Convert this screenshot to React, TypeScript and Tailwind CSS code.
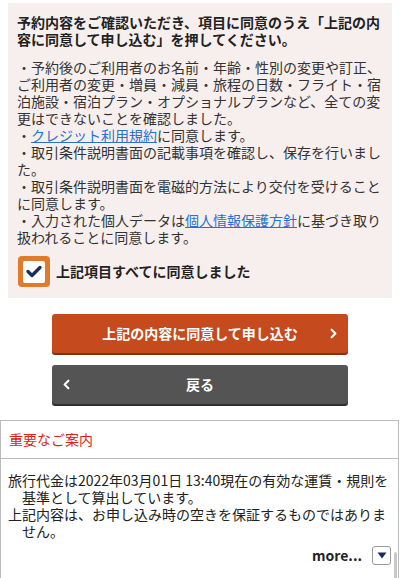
import React, { useState } from "react";
import { ChevronRight, ChevronLeft } from "lucide-react";

const App: React.FC = () => {
  const [agreed, setAgreed] = useState<boolean>(true);

  return (
    <div className="w-[400px] h-[578px] overflow-hidden bg-white font-['Noto_Sans_CJK_JP','Noto_Sans',sans-serif] text-[#222]">
      {/* 同意ボックス */}
      <div className="mt-[3px] mx-2 bg-[#f7efed] px-[9px] pt-[11px] pb-[11px]">
        <p className="text-[14px] font-bold leading-[17px] text-[#222]">
          予約内容をご確認いただき、項目に同意のうえ「上記の内容に同意して申し込む」を押してください。
        </p>
        <div className="mt-[11px] text-[14px] leading-[17px] text-[#333]">
          <p>
            ・予約後のご利用者のお名前・年齢・性別の変更や訂正、ご利用者の変更・増員・減員・旅程の日数・フライト・宿泊施設・宿泊プラン・オプショナルプランなど、全ての変更はできないことを確認しました。
          </p>
          <p>
            ・
            <a href="#" className="text-[#2a6fd1] underline">
              クレジット利用規約
            </a>
            に同意します。
          </p>
          <p>・取引条件説明書面の記載事項を確認し、保存を行いました。</p>
          <p>・取引条件説明書面を電磁的方法により交付を受けることに同意します。</p>
          <p>
            ・入力された個人データは
            <a href="#" className="text-[#2a6fd1] underline">
              個人情報保護方針
            </a>
            に基づき取り扱われることに同意します。
          </p>
        </div>
        <label
          className="mt-[10px] ml-[1px] flex items-center gap-[6px] cursor-pointer"
          onClick={() => setAgreed(!agreed)}
        >
          <span className="w-[32px] h-[31px] rounded-[4px] bg-[#e07a2c] flex items-center justify-center">
            <span className="w-[22px] h-[22px] bg-white rounded-[2px] flex items-center justify-center">
              {agreed && (
                <svg width="16" height="13" viewBox="0 0 16 13">
                  <path
                    d="M2 6.5 L6 10.5 L14 2.5"
                    fill="none"
                    stroke="#1b2d5a"
                    strokeWidth="3.2"
                    strokeLinecap="round"
                    strokeLinejoin="round"
                  />
                </svg>
              )}
            </span>
          </span>
          <span className="text-[14px] font-bold text-[#222]">
            上記項目すべてに同意しました
          </span>
        </label>
      </div>

      {/* ボタン */}
      <div className="mt-4 flex flex-col items-center gap-3">
        <button className="w-[296px] h-[39px] rounded-[3px] bg-[#c54a1e] shadow-[0_2px_0_#7c3511] flex items-center text-white text-[14px] font-bold">
          <span className="w-[30px]" />
          <span className="flex-1 text-center">上記の内容に同意して申し込む</span>
          <span className="w-[30px] flex justify-center">
            <ChevronRight size={15} strokeWidth={3.5} />
          </span>
        </button>
        <button className="w-[296px] h-[39px] rounded-[3px] bg-[#545454] shadow-[0_2px_0_#2e2e2e] flex items-center text-white text-[14px] font-bold">
          <span className="w-[28px] flex justify-center">
            <ChevronLeft size={15} strokeWidth={3.5} />
          </span>
          <span className="flex-1 text-center">戻る</span>
          <span className="w-[28px]" />
        </button>
      </div>

      {/* 重要なご案内 */}
      <div className="relative mt-4 w-[399px] h-[160px] border border-[#bbb]">
        <div className="h-[38px] px-[8px] flex items-center border-b border-[#bbb] text-[14px] text-[#d9221c]">
          重要なご案内
        </div>
        <div className="pl-[7px] pt-[13px] text-[14px] leading-[17px] text-[#222] whitespace-nowrap">
          <p className="pl-[14px] -indent-[14px]">
            旅行代金は2022年03月01日 13:40現在の有効な運賃・規則を
            <br />
            基準として算出しています。
          </p>
          <p className="pl-[14px] -indent-[14px]">
            上記内容は、お申し込み時の空きを保証するものではありま
            <br />
            せん。
          </p>
        </div>
        <div className="mt-[5px] pr-[7px] flex justify-end items-center gap-[10px]">
          <span className="text-[14px] font-semibold text-[#222]">more...</span>
          <button className="w-[19px] h-[19px] rounded-[3px] border border-[#9a9a9a] bg-white flex items-center justify-center">
            <svg width="10" height="7" viewBox="0 0 10 7">
              <path d="M0.5 0.5 L9.5 0.5 L5 6.5 Z" fill="#1b2d5a" />
            </svg>
          </button>
        </div>
        <div className="absolute right-[1px] top-[131px] w-[3px] h-[40px] bg-[#c8c8c8] rounded-full" />
      </div>
    </div>
  );
};

export default App;
